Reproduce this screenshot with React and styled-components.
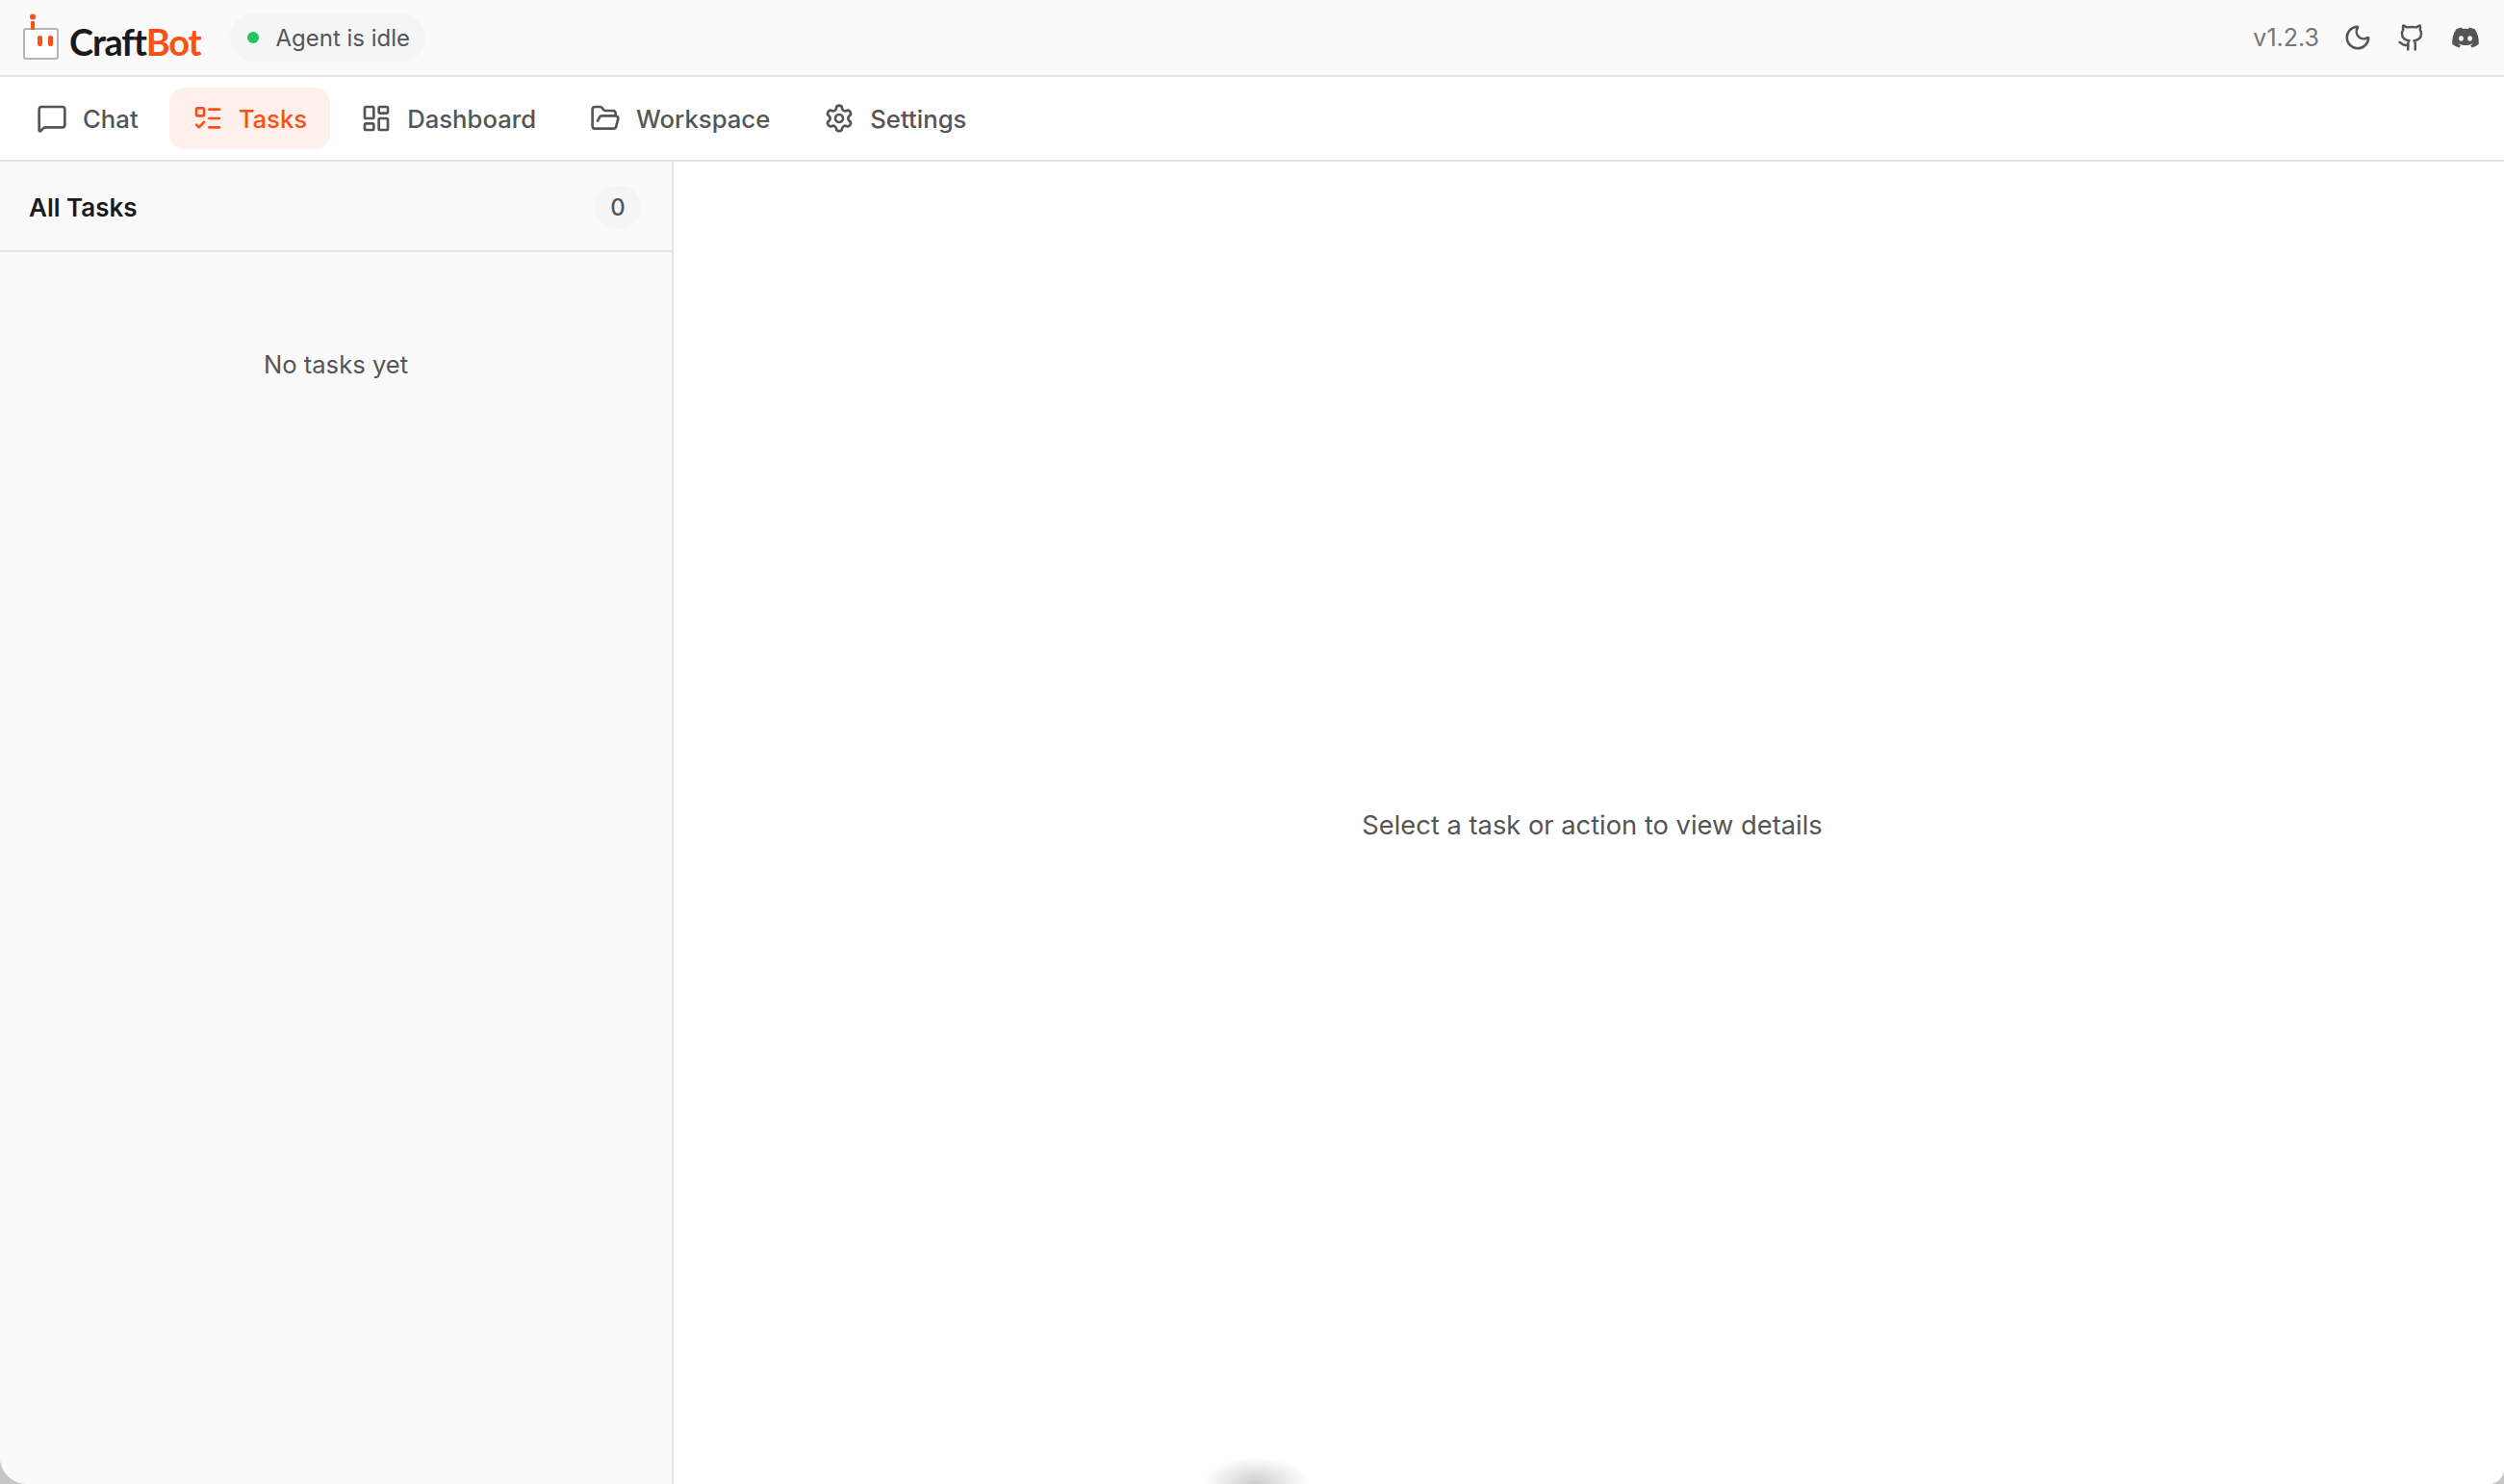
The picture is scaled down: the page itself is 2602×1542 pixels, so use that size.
import styled, { createGlobalStyle } from 'styled-components'
import { MessageSquare, ListTodo, LayoutDashboard, FolderOpen, Settings, Moon, Github } from 'lucide-react'
import { FaDiscord } from 'react-icons/fa'

const GlobalStyle = createGlobalStyle`
	html, body {
		margin: 0;
		padding: 0;
		background: #c6c6c6;
	}
	* {
		box-sizing: border-box;
	}
`

const AppFrame = styled.div`
	position: relative;
	width: 2602px;
	height: 1542px;
	display: flex;
	flex-direction: column;
	overflow: hidden;
	background: #fff;
	border-bottom-left-radius: 28px;
	border-bottom-right-radius: 16px;
	font-family: Inter, "Liberation Sans", sans-serif;
	color: #555;
`

const TopBar = styled.header`
	height: 80px;
	flex-shrink: 0;
	display: flex;
	align-items: center;
	justify-content: space-between;
	padding: 0 24px;
	background: #fafafa;
	border-bottom: 2px solid #e5e5e5;
`

const BarGroup = styled.div`
	display: flex;
	align-items: center;
`

const Logo = styled.div`
	display: flex;
	align-items: center;
	gap: 10px;
	margin-top: 7px;
`

const LogoMark = styled.svg`
	display: block;
	margin-top: -10px;
`

const LogoText = styled.span`
	font-family: Lato, Inter, sans-serif;
	font-size: 38px;
	font-weight: 700;
	line-height: 40px;
	letter-spacing: -1.2px;
	color: #1a1a1a;
`

const LogoAccent = styled.span`
	color: #ff4f18;
`

const StatusPill = styled.div`
	display: flex;
	align-items: center;
	gap: 17px;
	height: 50px;
	margin-left: 31px;
	padding: 0 16px 0 18px;
	border-radius: 25px;
	background: #f5f5f5;
	font-size: 24px;
	color: #555;
`

const StatusDot = styled.span`
	width: 12px;
	height: 12px;
	border-radius: 50%;
	background: #22c55e;
`

const Version = styled.span`
	font-size: 25px;
	color: #777;
`

const IconButton = styled.span`
	display: flex;
	width: 32px;
	height: 32px;
	align-items: center;
	justify-content: center;
	margin-left: 24px;
	color: #555;
`

const NavBar = styled.nav`
	height: 88px;
	flex-shrink: 0;
	display: flex;
	align-items: center;
	gap: 8px;
	padding: 0 14px;
	background: #fff;
	border-bottom: 2px solid #e5e5e5;
`

const NavItem = styled.div`
	display: flex;
	align-items: center;
	gap: 16px;
	height: 64px;
	padding: 0 24px;
	border-radius: 16px;
	font-size: 25.7px;
	font-weight: 500;
	background: ${(props) => (props.$active ? '#fff0ec' : 'transparent')};
	color: ${(props) => (props.$active ? '#ff4f18' : '#555')};
`

const Body = styled.main`
	flex: 1;
	display: flex;
	min-height: 0;
`

const Sidebar = styled.aside`
	width: 700px;
	flex-shrink: 0;
	display: flex;
	flex-direction: column;
	background: #fafafa;
	border-right: 2px solid #e5e5e5;
`

const SidebarHeader = styled.div`
	height: 94px;
	display: flex;
	align-items: center;
	justify-content: space-between;
	padding: 2px 32px 0 30px;
	border-bottom: 2px solid #e5e5e5;
`

const SidebarTitle = styled.h2`
	margin: 0;
	font-size: 26px;
	font-weight: 600;
	color: #1a1a1a;
`

const CountBadge = styled.span`
	display: flex;
	align-items: center;
	justify-content: center;
	min-width: 48px;
	height: 44px;
	border-radius: 22px;
	background: #f5f5f5;
	font-size: 24px;
	font-weight: 500;
	color: #555;
`

const EmptyList = styled.div`
	padding-top: 97px;
	text-align: center;
	font-size: 25.6px;
	line-height: 40px;
	color: #555;
`

const DetailPane = styled.section`
	flex: 1;
	display: flex;
	align-items: center;
	justify-content: center;
	padding: 4px 0 0 7px;
	background: #fff;
	font-size: 27.3px;
	color: #555;
`

const BottomShade = styled.div`
	position: absolute;
	left: 1250px;
	bottom: -28px;
	width: 110px;
	height: 56px;
	border-radius: 50%;
	background: radial-gradient(closest-side, rgba(0, 0, 0, 0.2), rgba(0, 0, 0, 0));
`

const navItems = [
	{ label: 'Chat', icon: MessageSquare },
	{ label: 'Tasks', icon: ListTodo, active: true },
	{ label: 'Dashboard', icon: LayoutDashboard },
	{ label: 'Workspace', icon: FolderOpen },
	{ label: 'Settings', icon: Settings },
]

const App = () => {
	return (
		<AppFrame>
			<GlobalStyle />
			<TopBar>
				<BarGroup>
					<Logo>
						<LogoMark width="38" height="48" viewBox="0 0 38 48" fill="none">
							<rect x="1" y="16" width="35" height="31" rx="2" fill="#fff" stroke="#b5b5b5" strokeWidth="2" />
							<circle cx="10" cy="3.5" r="3" fill="#ff4f18" />
							<rect x="8" y="8" width="4" height="9" rx="1" fill="#ff4f18" />
							<rect x="15" y="23" width="5" height="11" rx="2" fill="#ff4f18" />
							<rect x="26" y="23" width="5" height="11" rx="2" fill="#ff4f18" />
						</LogoMark>
						<LogoText>
							Craft<LogoAccent>Bot</LogoAccent>
						</LogoText>
					</Logo>
					<StatusPill>
						<StatusDot />
						Agent is idle
					</StatusPill>
				</BarGroup>
				<BarGroup>
					<Version>v1.2.3</Version>
					<IconButton>
						<Moon size={30} />
					</IconButton>
					<IconButton>
						<Github size={30} />
					</IconButton>
					<IconButton>
						<FaDiscord size={30} />
					</IconButton>
				</BarGroup>
			</TopBar>
			<NavBar>
				{navItems.map((item) => (
					<NavItem key={item.label} $active={item.active}>
						<item.icon size={32} />
						{item.label}
					</NavItem>
				))}
			</NavBar>
			<Body>
				<Sidebar>
					<SidebarHeader>
						<SidebarTitle>All Tasks</SidebarTitle>
						<CountBadge>0</CountBadge>
					</SidebarHeader>
					<EmptyList>No tasks yet</EmptyList>
				</Sidebar>
				<DetailPane>Select a task or action to view details</DetailPane>
			</Body>
			<BottomShade />
		</AppFrame>
	)
}

export default App
